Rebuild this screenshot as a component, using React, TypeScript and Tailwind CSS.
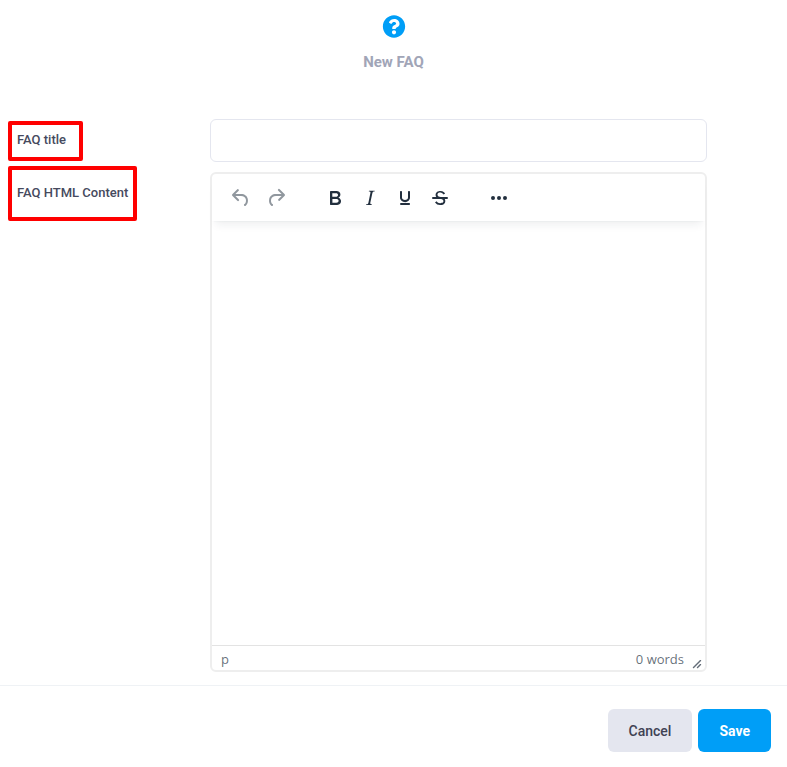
import React from "react";
import { FaQuestionCircle } from "react-icons/fa";

const toolGroups = [
  [
    {
      label: "Undo",
      disabled: true,
      path: "M6.4 8H12c3.7 0 6.2 2 6.8 5.1.6 2.7-.4 5.6-2.3 6.8a1 1 0 0 1-1-1.8c1.1-.6 1.8-2.7 1.4-4.6-.5-2.1-2.1-3.5-4.9-3.5H6.4l3.3 3.3a1 1 0 1 1-1.4 1.4l-5-5a1 1 0 0 1 0-1.4l5-5a1 1 0 0 1 1.4 1.4L6.4 8Z",
    },
    {
      label: "Redo",
      disabled: true,
      path: "M17.6 10H12c-2.8 0-4.4 1.4-4.9 3.5-.4 2 .3 4 1.4 4.6a1 1 0 1 1-1 1.8c-2-1.2-2.9-4.1-2.3-6.8.6-3 3-5.1 6.8-5.1h5.6l-3.3-3.3a1 1 0 1 1 1.4-1.4l5 5a1 1 0 0 1 0 1.4l-5 5a1 1 0 0 1-1.4-1.4l3.3-3.3Z",
    },
  ],
  [
    {
      label: "Bold",
      path: "M7.8 19c-.3 0-.5 0-.6-.2l-.2-.5V5.7c0-.2 0-.4.2-.5l.6-.2h5c1.5 0 2.7.3 3.5 1 .7.6 1.1 1.4 1.1 2.5a3 3 0 0 1-.6 1.9c-.4.6-1 1-1.6 1.2.4.1.9.3 1.3.6s.8.7 1 1.2c.4.4.5 1 .5 1.6 0 1.3-.4 2.3-1.3 3-.8.7-2.1 1-3.8 1H7.8Zm5-8.3c.6 0 1.2-.1 1.6-.5.4-.3.6-.7.6-1.3 0-1.1-.8-1.7-2.3-1.7H9.3v3.5h3.4Zm.5 6c.7 0 1.3-.1 1.7-.4.4-.4.6-.9.6-1.5s-.2-1-.7-1.4c-.4-.3-1-.4-2-.4H9.4v3.8h4Z",
    },
    {
      label: "Italic",
      path: "M16.7 4.7l-.1.9h-.3c-.6 0-1 0-1.4.3-.3.3-.4.6-.5 1.1l-2.1 9.8v.6c0 .5.4.8 1.4.8h.2l-.2.8H8l.2-.8h.2c1.1 0 1.8-.5 2-1.5l2-9.8.1-.5c0-.6-.4-.8-1.4-.8h-.3l.2-.9h5.8Z",
    },
    {
      label: "Underline",
      path: "M16 5c.6 0 1 .4 1 1v5.5a4 4 0 0 1-.4 1.8l-1 1.4a5.3 5.3 0 0 1-5.5 1 5 5 0 0 1-1.6-1c-.5-.4-.8-.9-1.1-1.4a4 4 0 0 1-.4-1.8V6c0-.6.4-1 1-1s1 .4 1 1v5.5c0 .3 0 .6.2 1l.6.7a3.3 3.3 0 0 0 2.2.8 3.4 3.4 0 0 0 2.2-.8c.3-.2.4-.5.6-.8l.2-.9V6c0-.6.4-1 1-1ZM8 17h8c.6 0 1 .4 1 1s-.4 1-1 1H8a1 1 0 0 1 0-2Z",
    },
    {
      label: "Strikethrough",
      path: "M15.6 8.5c-.5-.7-1-1.1-1.3-1.3-.6-.4-1.3-.6-2-.6-2.7 0-2.8 1.7-2.8 2.1 0 1.6 1.8 2 3.2 2.3 4.4.9 4.6 2.8 4.6 3.9 0 1.4-.7 4.1-5 4.1A6.2 6.2 0 0 1 7 16.4l1.5-1.1c.4.6 1.6 2 3.7 2 1.6 0 2.5-.4 3-1.2.4-.8.3-2-.8-2.6-.7-.4-1.6-.7-2.9-1-1-.2-3.9-.8-3.9-3.6C7.6 6 10.3 5 12.4 5c2.9 0 4.2 1.6 4.7 2.4l-1.5 1.1ZM5 11h14a1 1 0 0 1 0 2H5a1 1 0 0 1 0-2Z",
    },
  ],
  [
    {
      label: "More",
      path: "M6 10a2 2 0 1 0 0 4 2 2 0 0 0 0-4Zm6 0a2 2 0 1 0 0 4 2 2 0 0 0 0-4Zm6 0a2 2 0 1 0 0 4 2 2 0 0 0 0-4Z",
    },
  ],
];

const Toolbar = () => {
  return (
    <div className="relative flex flex-row gap-6 px-[11px] pt-[5px] pb-1 h-[47px] bg-white rounded-t-md shadow-[0_2px_2px_-2px_rgba(34,47,62,0.1),0_8px_8px_-4px_rgba(34,47,62,0.07)]">
      {toolGroups.map((group) => (
        <div key={group[0].label} className="flex flex-row items-center">
          {group.map((tool: any) => (
            <button
              key={tool.label}
              type="button"
              aria-label={tool.label}
              disabled={tool.disabled}
              className="flex items-center justify-center w-[35px] h-7 text-[#222f3e] disabled:text-[#222f3e]/50"
            >
              <svg width="24" height="24" viewBox="0 0 24 24" fill="currentColor">
                <path
                  d={tool.path}
                  className={
                    tool.label === "Bold"
                      ? "[fill-rule:evenodd]"
                      : "[fill-rule:nonzero]"
                  }
                />
              </svg>
            </button>
          ))}
        </div>
      ))}
    </div>
  );
};

const App = () => {
  return (
    <form className="min-h-screen bg-white font-['Roboto',sans-serif]">
      <header className="flex flex-col items-center gap-[13px] pt-[15px] pb-[46px]">
        <FaQuestionCircle className="w-6 h-[23px] text-[#009ef7]" />
        <h1 className="text-[15px] leading-[22px] font-bold text-[#a1a5b7]">
          New FAQ
        </h1>
      </header>

      <main className="flex flex-col gap-[10px] pl-[17px] pr-20 pb-[13px]">
        <div className="flex flex-row items-start">
          <div className="w-[193px] shrink-0 pt-2">
            <label
              htmlFor="title"
              className="relative inline-block text-[13px] leading-5 font-medium text-[#464a5e]"
            >
              FAQ title
              <span className="absolute -left-[9px] -right-[17px] -top-[9px] -bottom-[11px] border-4 border-[#ff0000] rounded-xs" />
            </label>
          </div>
          <input
            id="title"
            type="text"
            className="flex-1 min-w-0 h-[43px] px-4 text-sm border border-[#e4e6ef] rounded-md"
          />
        </div>

        <div className="flex flex-row items-start">
          <div className="w-[193px] shrink-0 pt-2">
            <label
              htmlFor="content"
              className="relative inline-block text-[13px] leading-5 font-medium text-[#464a5e]"
            >
              FAQ HTML Content
              <span className="absolute -left-[9px] -right-[9px] -top-[17px] -bottom-[18px] border-4 border-[#ff0000] rounded-xs" />
            </label>
          </div>
          <div className="flex-1 min-w-0 flex flex-col border-2 border-[#eeeeee] rounded-md">
            <Toolbar />
            <textarea
              id="content"
              className="block w-full h-[424px] p-4 text-base resize-none outline-none"
            />
            <div className="flex flex-row items-center justify-between h-[25px] pl-[9px] pr-[3px] pt-[2px] border-t border-[#e3e3e3] font-['Open_Sans',sans-serif] text-[13px] leading-5 text-[#222f3e]/70">
              <span>p</span>
              <div className="flex flex-row items-end gap-2">
                <span>0 words</span>
                <svg
                  width="10"
                  height="10"
                  viewBox="0 0 10 10"
                  className="fill-[#222f3e]/70"
                >
                  <path d="M8.1 1.1A.5.5 0 1 1 9 2l-7 7A.5.5 0 1 1 1 8l7-7ZM8.1 5.1A.5.5 0 1 1 9 6l-3 3A.5.5 0 1 1 5 8l3-3Z" />
                </svg>
              </div>
            </div>
          </div>
        </div>
      </main>

      <footer className="flex flex-row justify-end gap-[6px] px-4 pt-[23px] pb-4 border-t border-[#eff2f5]">
        <button
          type="button"
          className="h-[43px] px-[21px] text-sm font-medium text-[#3f4254] bg-[#e4e6ef] rounded-md"
        >
          Cancel
        </button>
        <button
          type="submit"
          className="h-[43px] px-[21px] text-sm font-bold text-white bg-[#009ef7] rounded-md"
        >
          Save
        </button>
      </footer>
    </form>
  );
};

export default App;
